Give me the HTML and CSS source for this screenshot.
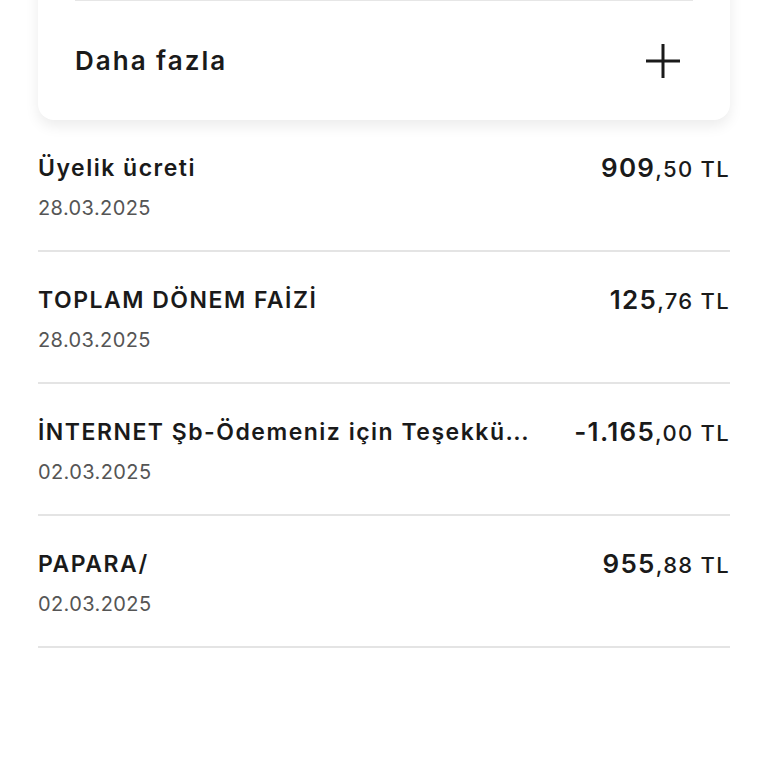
FILE: index.html
```html
<!DOCTYPE html>
<html lang="tr">
<head>
<meta charset="utf-8">
<link rel="stylesheet" href="styles.css">
</head>
<body>
<div class="page">
  <div class="card">
    <div class="card-divider"></div>
    <div class="more-row">
      <span class="more-label">Daha fazla</span>
      <svg class="plus" width="36" height="36" viewBox="0 0 36 36"><path d="M18 1V35M1 18H35" stroke="#1a1a1a" stroke-width="3" fill="none"/></svg>
    </div>
  </div>
  <ul class="list">
    <li class="item">
      <div class="info"><div class="title">Üyelik ücreti</div><div class="date">28.03.2025</div></div>
      <div class="amount"><span class="int">909</span><span class="dec">,50 TL</span></div>
    </li>
    <li class="item">
      <div class="info"><div class="title">TOPLAM DÖNEM FAİZİ</div><div class="date">28.03.2025</div></div>
      <div class="amount"><span class="int">125</span><span class="dec">,76 TL</span></div>
    </li>
    <li class="item">
      <div class="info"><div class="title">İNTERNET Şb-Ödemeniz için Teşekkü<span class="dots">...</span></div><div class="date">02.03.2025</div></div>
      <div class="amount"><span class="int">-1.165</span><span class="dec">,00 TL</span></div>
    </li>
    <li class="item">
      <div class="info"><div class="title">PAPARA/</div><div class="date">02.03.2025</div></div>
      <div class="amount"><span class="int">955</span><span class="dec">,88 TL</span></div>
    </li>
  </ul>
</div>
</body>
</html>
```
FILE: styles.css
```css
html, body { margin: 0; padding: 0; background: #fff; }
body { font-family: "Inter", "Noto Sans", sans-serif; color: #1a1a1a; width: 768px; height: 768px; overflow: hidden; }
.page { padding: 0 38px; }
.card {
  margin-top: -20px;
  background: #fff;
  border-radius: 0 0 16px 16px;
  box-shadow: 0 6px 14px rgba(0,0,0,0.08);
  padding: 20px 37px 0;
  box-sizing: border-box;
  height: 140px;
}
.card-divider { height: 1px; background: #e6e6e6; }
.more-row { display: flex; align-items: center; justify-content: space-between; height: 119px; }
.more-label { font-size: 26px; font-weight: 600; letter-spacing: 2px; }
.plus { margin-right: 12px; }
.list { list-style: none; margin: 0; padding: 0; }
.item {
  display: flex; justify-content: space-between; align-items: flex-start;
  height: 132px; box-sizing: border-box; border-bottom: 2px solid #e4e4e4;
  padding-top: 33px;
}
.info { min-width: 0; flex: 0 1 auto; }
.title { font-size: 23px; font-weight: 600; letter-spacing: 1.5px; white-space: nowrap; line-height: 30px; }
.dots { letter-spacing: 0.5px; }
.date { font-size: 20px; color: #555; letter-spacing: 0.4px; margin-top: 12px; line-height: 26px; }
.amount { white-space: nowrap; line-height: 30px; letter-spacing: 1.3px; }
.int { font-size: 26px; font-weight: 600; }
.dec { font-size: 22px; font-weight: 500; }
```
